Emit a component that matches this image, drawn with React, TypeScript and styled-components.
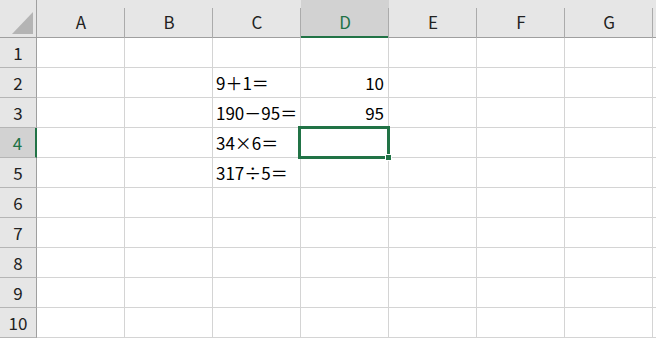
import React from 'react';
import styled, { createGlobalStyle } from 'styled-components';

const GlobalStyle = createGlobalStyle`
    html, body {
        margin: 0;
        padding: 0;
        background: #fff;
    }
    body {
        font-family: "Noto Sans CJK JP", "Noto Sans", sans-serif;
    }
`;

const green = '#217346';

const Sheet = styled.div`
    display: grid;
    grid-template-columns: 37px repeat(7, 88px) 1fr;
    grid-template-rows: 38px repeat(10, 30px);
    width: 656px;
    height: 338px;
    overflow: hidden;
    background: #fff;
    font-size: 17px;
    color: #000;
`;

const Corner = styled.div`
    position: relative;
    background: #e6e6e6;
    border-right: 1px solid #9f9f9f;
    border-bottom: 1px solid #9f9f9f;
    box-sizing: border-box;

    svg {
        display: block;
    }
`;

const ColHeader = styled.div<{ $selected?: boolean }>`
    position: relative;
    box-sizing: border-box;
    background: ${p => (p.$selected ? '#d2d2d2' : '#e6e6e6')};
    color: ${p => (p.$selected ? green : '#222')};
    border-bottom: ${p => (p.$selected ? `2px solid ${green}` : '1px solid #9f9f9f')};
    text-align: center;
    padding-top: 6px;
    line-height: 31px;

    &::after {
        content: '';
        position: absolute;
        right: 0;
        top: 8px;
        bottom: ${p => (p.$selected ? '-2px' : '-1px')};
        width: 1px;
        background: #ababab;
    }
`;

const RowHeader = styled.div<{ $selected?: boolean }>`
    box-sizing: border-box;
    background: ${p => (p.$selected ? '#d2d2d2' : '#e6e6e6')};
    color: ${p => (p.$selected ? green : '#222')};
    border-right: ${p => (p.$selected ? `2px solid ${green}` : '1px solid #9f9f9f')};
    border-bottom: 1px solid #b5b5b5;
    text-align: center;
    line-height: 29px;
`;

const Cell = styled.div<{ $align?: 'left' | 'right' }>`
    position: relative;
    box-sizing: border-box;
    border-right: 1px solid #d4d4d4;
    border-bottom: 1px solid #d4d4d4;
    padding: 0 4px 0 3px;
    text-align: ${p => p.$align || 'left'};
    line-height: 29px;
    white-space: nowrap;
`;

const Selection = styled.div`
    position: absolute;
    left: -3px;
    top: -2px;
    width: 92px;
    height: 33px;
    box-sizing: border-box;
    border: 3px solid ${green};
    pointer-events: none;
    z-index: 2;
`;

const FillHandle = styled.div`
    position: absolute;
    right: -5px;
    bottom: -5px;
    width: 5px;
    height: 5px;
    background: ${green};
    border: 1px solid #fff;
`;

const columns = ['A', 'B', 'C', 'D', 'E', 'F', 'G', ''];

const data: Record<number, { c?: string; d?: string }> = {
    2: { c: '9＋1＝', d: '10' },
    3: { c: '190－95＝', d: '95' },
    4: { c: '34×6＝' },
    5: { c: '317÷5＝' },
};

const App: React.FC = () => {
    const rows = Array.from({ length: 10 }, (_, i) => i + 1);

    return (
        <>
            <GlobalStyle />
            <Sheet>
                <Corner>
                    <svg width="36" height="37">
                        <polygon points="33,12 33,34 12,34" fill="#b4b4b4" />
                    </svg>
                </Corner>
                {columns.map((col, i) => (
                    <ColHeader key={i} $selected={col === 'D'}>{col}</ColHeader>
                ))}
                {rows.map(r => (
                    <React.Fragment key={r}>
                        <RowHeader $selected={r === 4}>{r}</RowHeader>
                        {columns.map((col, i) => {
                            const row = data[r];
                            if (col === 'C') return <Cell key={i}>{row?.c}</Cell>;
                            if (col === 'D') {
                                return (
                                    <Cell key={i} $align="right">
                                        {row?.d}
                                        {r === 4 && (
                                            <Selection>
                                                <FillHandle />
                                            </Selection>
                                        )}
                                    </Cell>
                                );
                            }
                            return <Cell key={i} />;
                        })}
                    </React.Fragment>
                ))}
            </Sheet>
        </>
    );
};

export default App;
